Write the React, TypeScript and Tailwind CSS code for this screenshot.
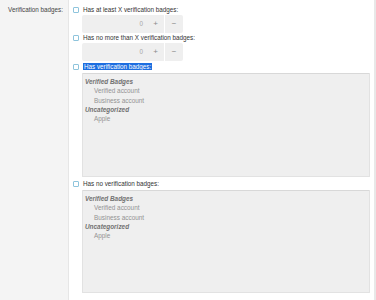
import { useState } from 'react'

const font = { fontFamily: '"Liberation Sans", Arial, sans-serif' }

interface Group {
  title: string
  items: string[]
}

const badgeGroups: Group[] = [
  { title: 'Verified Badges', items: ['Verified account', 'Business account'] },
  { title: 'Uncategorized', items: ['Apple'] }
]

function Checkbox({ checked, onChange }: { checked: boolean; onChange: () => void }) {
  return (
    <span
      onClick={onChange}
      className={`w-[6px] h-[6px] flex-shrink-0 border border-[#8ec4dc] rounded-[1px] ${
        checked ? 'bg-[#8ec4dc]' : 'bg-white'
      }`}
    />
  )
}

function NumberStepper() {
  const [value, setValue] = useState(0)
  return (
    <div className="ml-[9px] w-[101px] h-[18px] flex rounded-[2px] bg-[#efefef] overflow-hidden">
      <div className="flex-1 flex items-center justify-end pr-[4px] text-[#a8a8a8]">{value}</div>
      <button
        className="w-[17px] flex items-center justify-center text-[#8a8a8a] text-[8px]"
        onClick={() => setValue(value + 1)}
      >
        +
      </button>
      <div className="w-px bg-white" />
      <button
        className="w-[18px] flex items-center justify-center text-[#8a8a8a] text-[8px]"
        onClick={() => setValue(Math.max(0, value - 1))}
      >
        −
      </button>
    </div>
  )
}

// multi-select style list of badges
function BadgeList({ height }: { height: string }) {
  return (
    <div
      className={`${height} ml-[9px] mr-[4px] bg-[#efefef] border border-[#e2e2e2] border-t-[#d8d8d8] rounded-[1px] pt-[3px] pl-[2px] leading-[9.3px] text-[6.4px]`}
    >
      {badgeGroups.map((group) => (
        <div key={group.title}>
          <div className="font-bold italic text-[#727272]">{group.title}</div>
          {group.items.map((item) => (
            <div key={item} className="pl-[9px] text-[#939393]">
              {item}
            </div>
          ))}
        </div>
      ))}
    </div>
  )
}

export default function App() {
  const [checks, setChecks] = useState([false, false, false, false])
  const toggle = (i: number) => setChecks(checks.map((c, idx) => (idx === i ? !c : c)))

  return (
    <div className="w-[376px] h-[300px] flex bg-white text-[6.3px] text-[#333]" style={font}>
      {/* label column */}
      <div className="w-[69px] flex-shrink-0 bg-[#f4f4f4] border-r border-[#e6e6e6] flex justify-end pr-[5px] pt-[5px]">
        <div className="h-[10px] flex items-center text-[#444]">Verification badges:</div>
      </div>

      {/* options */}
      <div className="flex-1 flex flex-col pl-[4px] pt-[5px]">
        <div className="h-[10px] flex items-center gap-[4px]">
          <Checkbox checked={checks[0]} onChange={() => toggle(0)} />
          <span>Has at least X verification badges:</span>
        </div>
        <NumberStepper />

        <div className="h-[10px] flex items-center gap-[4px]">
          <Checkbox checked={checks[1]} onChange={() => toggle(1)} />
          <span>Has no more than X verification badges:</span>
        </div>
        <div className="h-[17px] flex">
          <NumberStepper />
        </div>

        <div className="h-[13px] flex items-center gap-[4px]">
          <Checkbox checked={checks[2]} onChange={() => toggle(2)} />
          <span className="bg-[#1d6ee0] text-white px-px leading-[7px]">Has verification badges:</span>
        </div>
        <BadgeList height="h-[104px]" />

        <div className="h-[13px] flex items-center gap-[4px]">
          <Checkbox checked={checks[3]} onChange={() => toggle(3)} />
          <span>Has no verification badges:</span>
        </div>
        <BadgeList height="h-[103px]" />
      </div>

      {/* scrollbar edge */}
      <div className="w-[2px] bg-[#e8e8e8]" />
    </div>
  )
}
